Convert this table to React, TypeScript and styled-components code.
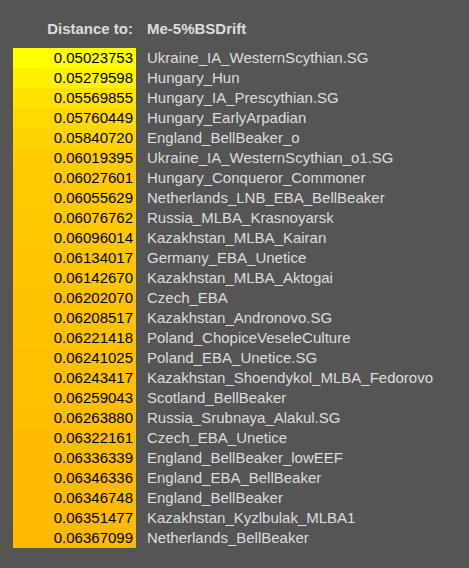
import React from 'react';
import styled, {createGlobalStyle} from 'styled-components';

const GlobalStyle = createGlobalStyle`
  html, body {
    margin: 0;
    padding: 0;
    background: #555555;
  }
  body {
    font-family: "Liberation Sans", Arial, sans-serif;
  }
`;

const Page = styled.div`
  width: 469px;
  height: 568px;
  padding-left: 13px;
  box-sizing: border-box;
  background: #555555;
`;

const Table = styled.div`
  display: grid;
  grid-template-columns: 123px 1fr;
`;

const HeadCell = styled.div<{$right?: boolean}>`
  height: 48px;
  box-sizing: border-box;
  padding: 20px ${p => (p.$right ? '3px' : '0')} 0 ${p => (p.$right ? '0' : '11px')};
  line-height: 18px;
  font-size: 15px;
  font-weight: bold;
  color: #dddddd;
  text-align: ${p => (p.$right ? 'right' : 'left')};
  white-space: nowrap;
`;

const ValueCell = styled.div`
  height: 20px;
  line-height: 20px;
  padding-right: 3px;
  font-size: 15px;
  color: #000000;
  text-align: right;
`;

const NameCell = styled.div`
  height: 20px;
  line-height: 20px;
  padding-left: 11px;
  font-size: 15px;
  color: #dddddd;
  white-space: nowrap;
`;

const rows: [string, string][] = [
  ['0.05023753', 'Ukraine_IA_WesternScythian.SG'],
  ['0.05279598', 'Hungary_Hun'],
  ['0.05569855', 'Hungary_IA_Prescythian.SG'],
  ['0.05760449', 'Hungary_EarlyArpadian'],
  ['0.05840720', 'England_BellBeaker_o'],
  ['0.06019395', 'Ukraine_IA_WesternScythian_o1.SG'],
  ['0.06027601', 'Hungary_Conqueror_Commoner'],
  ['0.06055629', 'Netherlands_LNB_EBA_BellBeaker'],
  ['0.06076762', 'Russia_MLBA_Krasnoyarsk'],
  ['0.06096014', 'Kazakhstan_MLBA_Kairan'],
  ['0.06134017', 'Germany_EBA_Unetice'],
  ['0.06142670', 'Kazakhstan_MLBA_Aktogai'],
  ['0.06202070', 'Czech_EBA'],
  ['0.06208517', 'Kazakhstan_Andronovo.SG'],
  ['0.06221418', 'Poland_ChopiceVeseleCulture'],
  ['0.06241025', 'Poland_EBA_Unetice.SG'],
  ['0.06243417', 'Kazakhstan_Shoendykol_MLBA_Fedorovo'],
  ['0.06259043', 'Scotland_BellBeaker'],
  ['0.06263880', 'Russia_Srubnaya_Alakul.SG'],
  ['0.06322161', 'Czech_EBA_Unetice'],
  ['0.06336339', 'England_BellBeaker_lowEEF'],
  ['0.06346336', 'England_EBA_BellBeaker'],
  ['0.06346748', 'England_BellBeaker'],
  ['0.06351477', 'Kazakhstan_Kyzlbulak_MLBA1'],
  ['0.06367099', 'Netherlands_BellBeaker'],
];

const min = parseFloat(rows[0][0]);
const max = parseFloat(rows[rows.length - 1][0]);

// yellow for the closest, shading to orange for the farthest
const shade = (v: number) => {
  const t = (v - min) / (max - min);
  const g = Math.round(255 - t * 69);
  return `rgb(255, ${g}, 0)`;
};

export default function App() {
  return (
    <Page>
      <GlobalStyle />
      <Table>
        <HeadCell $right>Distance to:</HeadCell>
        <HeadCell>Me-5%BSDrift</HeadCell>
        {rows.map(([dist, name]) => (
          <React.Fragment key={name}>
            <ValueCell style={{background: shade(parseFloat(dist))}}>{dist}</ValueCell>
            <NameCell>{name}</NameCell>
          </React.Fragment>
        ))}
      </Table>
    </Page>
  );
}
